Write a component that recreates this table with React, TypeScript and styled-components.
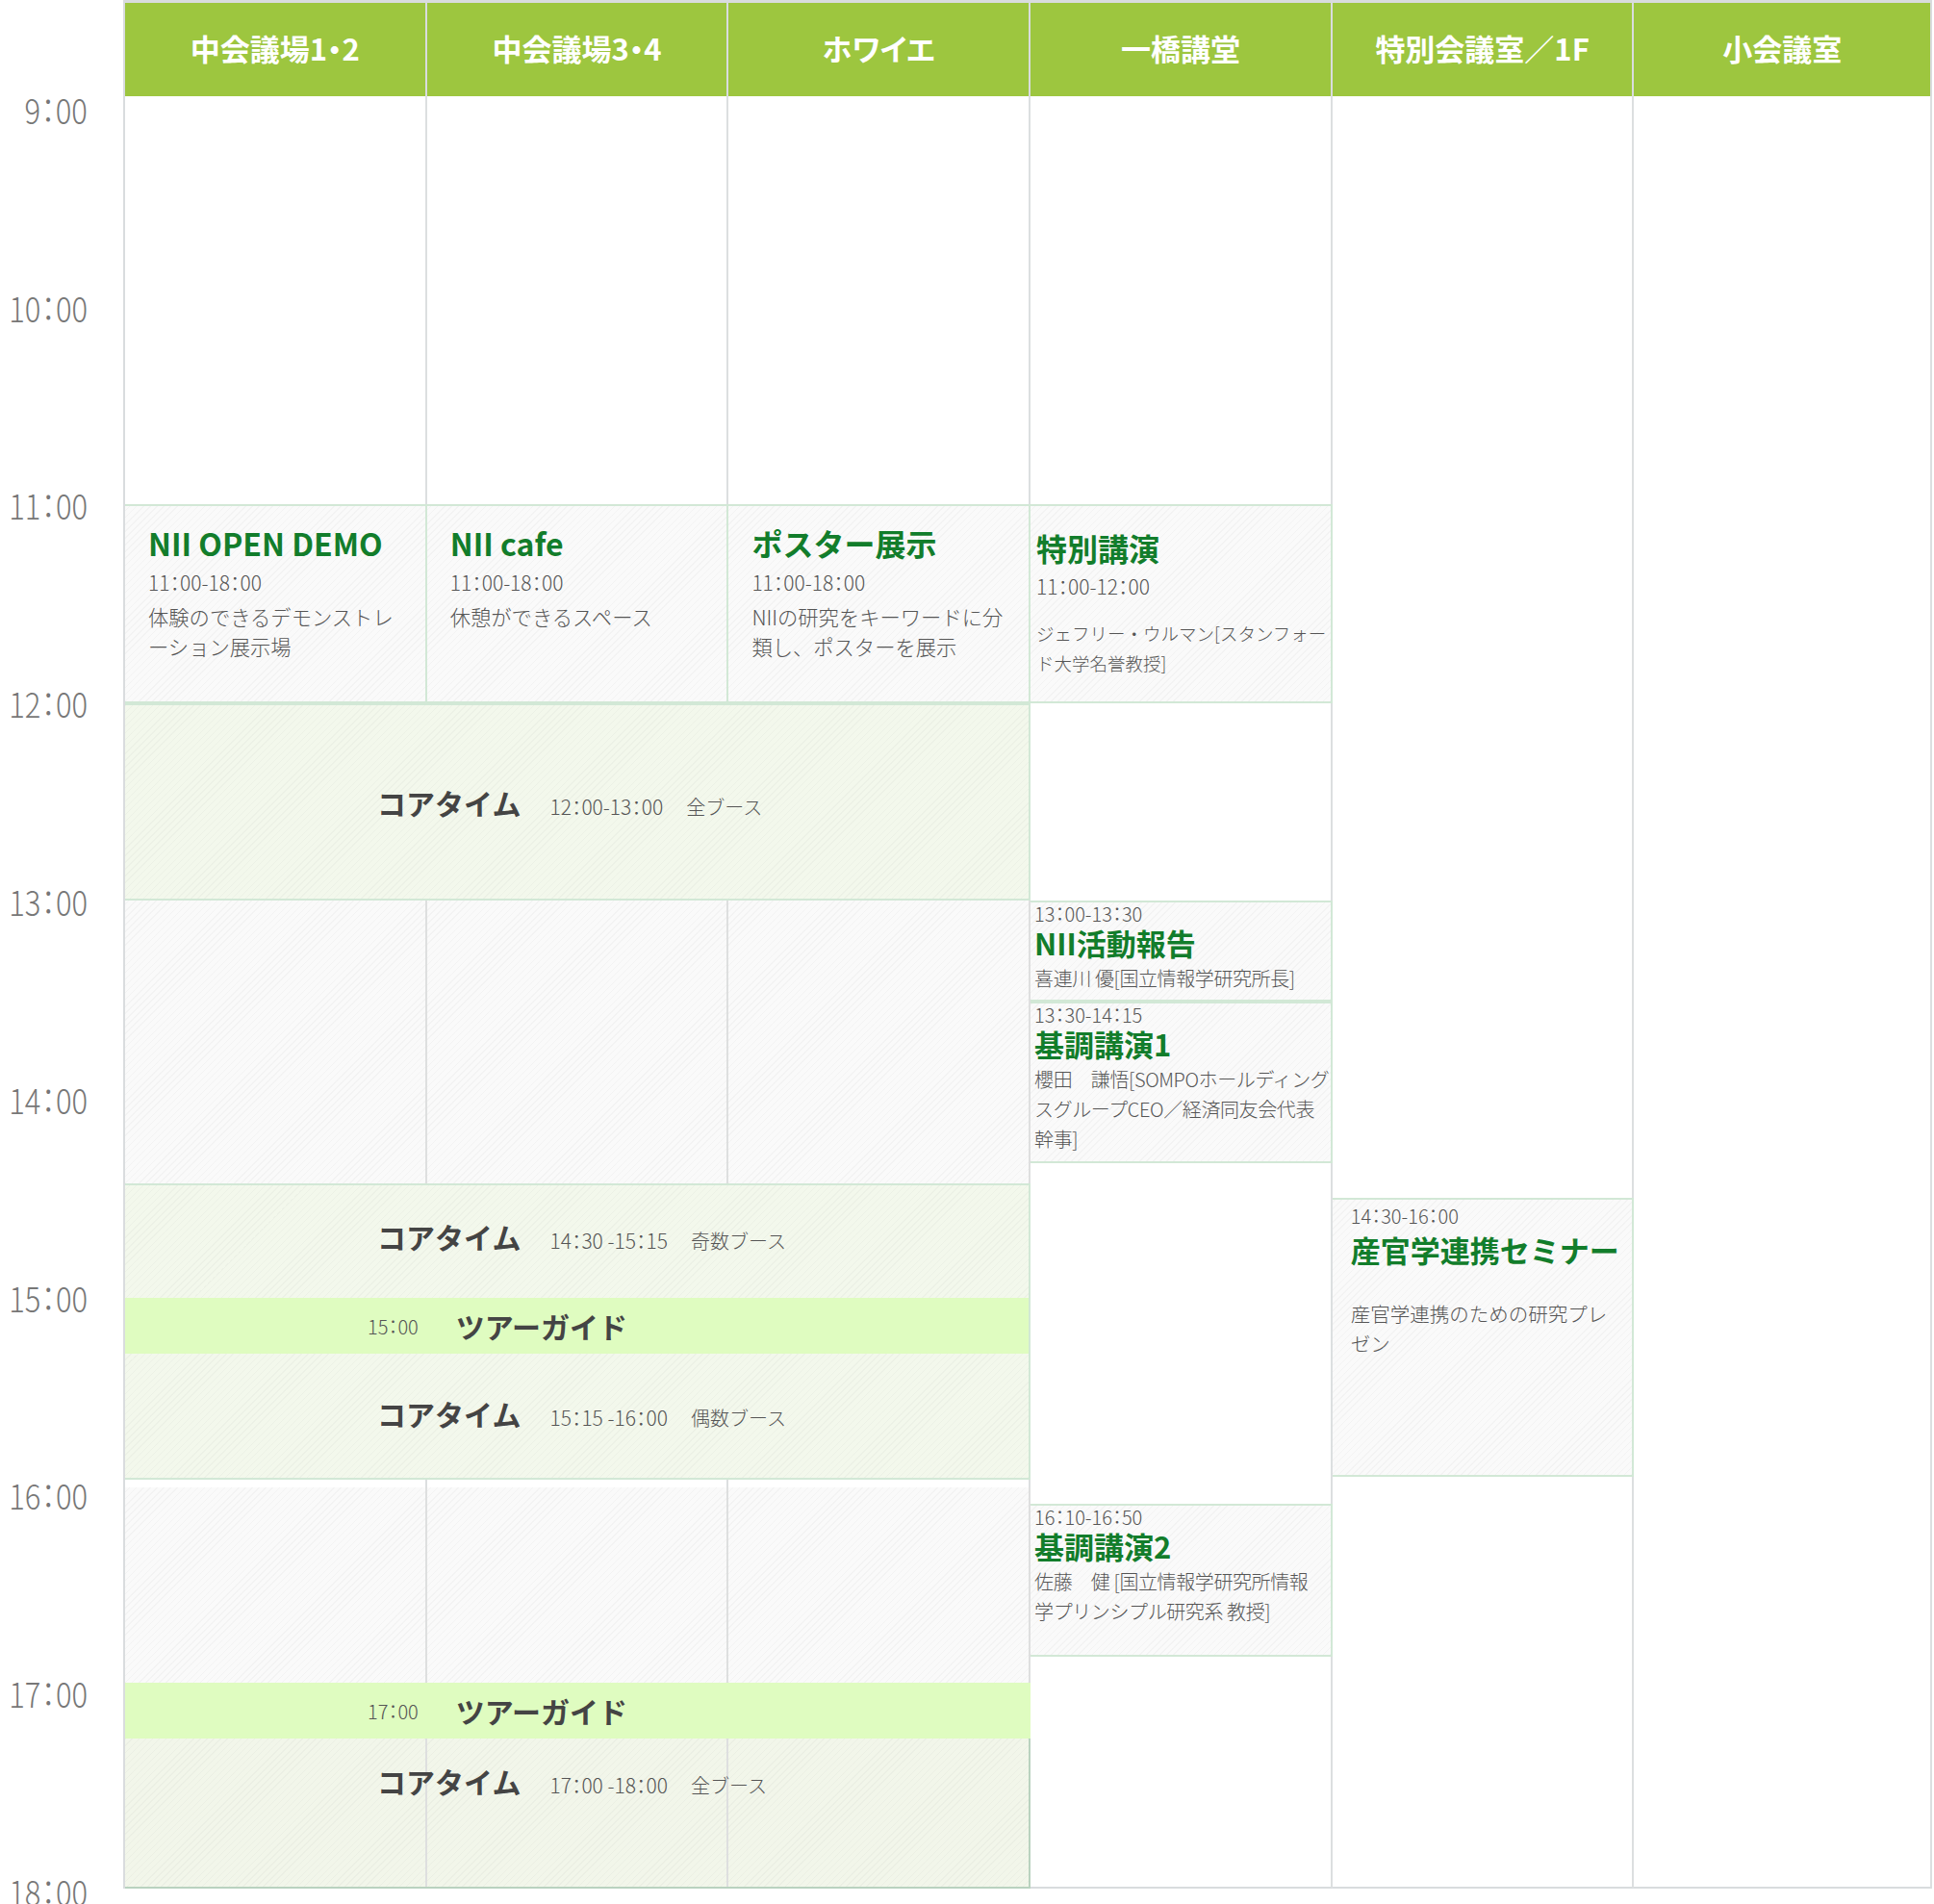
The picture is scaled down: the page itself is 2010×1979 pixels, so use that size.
import React from "react";
import styled, { createGlobalStyle, css } from "styled-components";

// y positions (page px) of every horizontal break in the timetable body
const LINES = [100, 524, 731, 936, 1041, 1209, 1230, 1245, 1535, 1538, 1546, 1563, 1722, 1749, 1807, 1963];
const rowTracks = LINES.slice(1)
  .map((y, i) => `${y - LINES[i]}px`)
  .join(" ");
const rows = (from: number, to: number) => `${LINES.indexOf(from) + 1} / ${LINES.indexOf(to) + 1}`;

const ROOMS = ["中会議場1・2", "中会議場3・4", "ホワイエ", "一橋講堂", "特別会議室／1F", "小会議室"];
const HOURS = ["9：00", "10：00", "11：00", "12：00", "13：00", "14：00", "15：00", "16：00", "17：00", "18：00"];

const GREEN_LINE = "#d2e8d6";
const GREY_LINE = "#dcdfe0";

const GlobalStyle = createGlobalStyle`
  html, body {
    margin: 0;
    padding: 0;
    background: #fff;
  }
  body {
    font-family: "Noto Sans CJK JP", "Noto Sans", sans-serif;
    color: #555;
  }
  * {
    box-sizing: border-box;
  }
`;

// proportional punctuation, so the fullwidth colons in times stay narrow
const palt = css`
  font-feature-settings: "palt";
`;

const hatch = (base: string) => css`
  background-color: ${base};
  background-image: repeating-linear-gradient(
    -45deg,
    rgba(0, 0, 0, 0.028) 0 1px,
    transparent 1px 5px
  );
`;

const Page = styled.div`
  display: flex;
  align-items: flex-start;
  width: 2010px;
`;

const TimeAxis = styled.div`
  flex: none;
  width: 128px;
  display: flex;
  flex-direction: column;
  padding-top: 10px;
`;

const HourMark = styled.div`
  height: 205.8px;
  display: flex;
  align-items: center;
  justify-content: flex-end;
  padding-right: 37px;
`;

const HourText = styled.span`
  ${palt}
  display: inline-block;
  font-size: 36px;
  font-weight: 200;
  line-height: 1;
  color: #777;
  white-space: nowrap;
  transform: scaleX(0.86);
  transform-origin: right center;
`;

const Table = styled.div`
  width: 1880px;
  border-top: 3px solid #d9dcde;
  border-left: 2px solid #d9dcde;
`;

const columns = css`
  display: grid;
  grid-template-columns: repeat(5, 313.7px) 1fr;
`;

const HeaderRow = styled.div`
  ${columns}
  height: 97px;
`;

const HeadCell = styled.div`
  ${palt}
  display: flex;
  align-items: center;
  justify-content: center;
  padding-bottom: 4px;
  background: #9dc63f;
  border-right: 2px solid #d9dcde;
  color: #fff;
  font-size: 31px;
  font-weight: 700;
  white-space: nowrap;
`;

const Body = styled.div`
  ${columns}
  grid-template-rows: ${rowTracks};
`;

const Track = styled.div<{ $col: number }>`
  grid-column: ${({ $col }) => $col};
  grid-row: 1 / -1;
  background: #fff;
  border-right: 2px solid ${GREY_LINE};
  border-bottom: 2px solid #d9dcde;
`;

const Placed = styled.div<{ $col: string; $row: string }>`
  grid-column: ${({ $col }) => $col};
  grid-row: ${({ $row }) => $row};
  min-width: 0;
  overflow: hidden;
`;

const EmptyCell = styled(Placed)<{ $tone?: "grey" | "green" }>`
  ${({ $tone }) => hatch($tone === "green" ? "#f2f6ea" : "#fafafa")}
  border-right: 2px solid #dedfdf;
`;

type Variant = "booth" | "keynote" | "talk" | "seminar";

const variantPad: Record<Variant, string> = {
  booth: "18px 10px 0 24px",
  keynote: "23px 0 0 6px",
  talk: "0 0 0 4px",
  seminar: "5px 0 0 19px",
};

const SessionBox = styled(Placed)<{ $variant: Variant }>`
  ${hatch("#fafafa")}
  border: 2px solid ${GREEN_LINE};
  border-left: none;
  padding: ${({ $variant }) => variantPad[$variant]};
`;

const Title = styled.div<{ $size: number; $lh: number; $gap: number }>`
  margin-top: ${({ $gap }) => $gap}px;
  color: #127d2b;
  font-size: ${({ $size }) => $size}px;
  line-height: ${({ $lh }) => $lh}px;
  font-weight: 700;
  white-space: nowrap;
`;

const Hours = styled.div<{ $size: number; $lh: number; $gap: number }>`
  ${palt}
  margin-top: ${({ $gap }) => $gap}px;
  font-size: ${({ $size }) => $size}px;
  line-height: ${({ $lh }) => $lh}px;
  font-weight: 300;
  color: #555;
  white-space: nowrap;
`;

const Desc = styled.div<{ $size: number; $gap: number; $lh: number; $tight?: boolean }>`
  margin-top: ${({ $gap }) => $gap}px;
  font-size: ${({ $size }) => $size}px;
  line-height: ${({ $lh }) => $lh}px;
  letter-spacing: ${({ $tight }) => ($tight ? "-0.4px" : "normal")};
  font-weight: 300;
  color: #555;
  white-space: nowrap;
`;

const CoreBlock = styled(Placed)`
  ${hatch("#f3f8ec")}
  border: 2px solid ${GREEN_LINE};
  border-left: none;
  display: flex;
  flex-direction: column;
`;

const CoreOverlay = styled(Placed)`
  border-right: 2px solid #b9d2bf;
  border-bottom: 2px solid #b9d2bf;
  padding-top: 24px;
`;

const CoreRow = styled.div<{ $h?: number; $lift?: number }>`
  display: flex;
  flex-wrap: wrap;
  align-items: baseline;
  align-content: center;
  padding: 0 0 ${({ $lift }) => $lift ?? 0}px 262px;
  height: ${({ $h }) => ($h ? `${$h}px` : "auto")};
  flex: ${({ $h }) => ($h ? "none" : "1")};
`;

const CoreTitle = styled.span`
  font-size: 30px;
  line-height: 40px;
  font-weight: 700;
  color: #444;
`;

const CoreTime = styled.span`
  ${palt}
  margin-left: 30px;
  font-size: 21px;
  font-weight: 300;
  color: #555;
`;

const CoreWhere = styled.span`
  margin-left: 24px;
  font-size: 20px;
  font-weight: 300;
  color: #555;
`;

const tourLine = css`
  display: flex;
  align-items: center;
  padding-left: 252px;
  background: #dffcc0;
`;

const TourBand = styled.div`
  ${tourLine}
  flex: none;
  height: 58px;
`;

const TourRow = styled(Placed)`
  ${tourLine}
`;

const TourTime = styled.span`
  ${palt}
  font-size: 20px;
  font-weight: 300;
  color: #555;
`;

const TourTitle = styled.span`
  margin-left: 39px;
  font-size: 30px;
  font-weight: 700;
  color: #444;
`;

type Session = {
  col: number;
  from: number;
  to: number;
  variant: Variant;
  title: string;
  hours: string;
  desc: string[];
};

const SESSIONS: Session[] = [
  {
    col: 1,
    from: 524,
    to: 731,
    variant: "booth",
    title: "NII OPEN DEMO",
    hours: "11：00-18：00",
    desc: ["体験のできるデモンストレ", "ーション展示場"],
  },
  {
    col: 2,
    from: 524,
    to: 731,
    variant: "booth",
    title: "NII cafe",
    hours: "11：00-18：00",
    desc: ["休憩ができるスペース"],
  },
  {
    col: 3,
    from: 524,
    to: 731,
    variant: "booth",
    title: "ポスター展示",
    hours: "11：00-18：00",
    desc: ["NIIの研究をキーワードに分", "類し、ポスターを展示"],
  },
  {
    col: 4,
    from: 524,
    to: 731,
    variant: "keynote",
    title: "特別講演",
    hours: "11：00-12：00",
    desc: ["ジェフリー・ウルマン[スタンフォー", "ド大学名誉教授]"],
  },
  {
    col: 4,
    from: 936,
    to: 1041,
    variant: "talk",
    title: "NII活動報告",
    hours: "13：00-13：30",
    desc: ["喜連川 優[国立情報学研究所長]"],
  },
  {
    col: 4,
    from: 1041,
    to: 1209,
    variant: "talk",
    title: "基調講演1",
    hours: "13：30-14：15",
    desc: ["櫻田　謙悟[SOMPOホールディング", "スグループCEO／経済同友会代表", "幹事]"],
  },
  {
    col: 5,
    from: 1245,
    to: 1535,
    variant: "seminar",
    title: "産官学連携セミナー",
    hours: "14：30-16：00",
    desc: ["産官学連携のための研究プレ", "ゼン"],
  },
  {
    col: 4,
    from: 1563,
    to: 1722,
    variant: "talk",
    title: "基調講演2",
    hours: "16：10-16：50",
    desc: ["佐藤　健 [国立情報学研究所情報", "学プリンシプル研究系 教授]"],
  },
];

const SessionCard = ({ s }: { s: Session }) => {
  const place = { $col: String(s.col), $row: rows(s.from, s.to) };
  if (s.variant === "booth" || s.variant === "keynote") {
    const keynote = s.variant === "keynote";
    return (
      <SessionBox {...place} $variant={s.variant}>
        <Title $size={32} $lh={40} $gap={0}>
          {s.title}
        </Title>
        <Hours $size={21} $lh={30} $gap={keynote ? 5 : 6}>
          {s.hours}
        </Hours>
        <Desc $size={keynote ? 18.5 : 21.3} $lh={30.5} $gap={keynote ? 19 : 6}>
          {s.desc.map((line) => (
            <div key={line}>{line}</div>
          ))}
        </Desc>
      </SessionBox>
    );
  }
  const seminar = s.variant === "seminar";
  return (
    <SessionBox {...place} $variant={s.variant}>
      <Hours $size={20} $lh={24} $gap={0}>
        {s.hours}
      </Hours>
      <Title $size={31} $lh={36} $gap={seminar ? 5 : 0}>
        {s.title}
      </Title>
      <Desc
        $size={seminar ? 20.5 : 20}
        $lh={seminar ? 30.5 : 31}
        $gap={seminar ? 33 : 3}
        $tight={!seminar}
      >
        {s.desc.map((line) => (
          <div key={line}>{line}</div>
        ))}
      </Desc>
    </SessionBox>
  );
};

const Core = ({ time, where }: { time: string; where: string }) => (
  <>
    <CoreTitle>コアタイム</CoreTitle>
    <CoreTime>{time}</CoreTime>
    <CoreWhere>{where}</CoreWhere>
  </>
);

const BOOTH_COLS = [1, 2, 3];

export default function App() {
  return (
    <>
      <GlobalStyle />
      <Page>
        <TimeAxis>
          {HOURS.map((h) => (
            <HourMark key={h}>
              <HourText>{h}</HourText>
            </HourMark>
          ))}
        </TimeAxis>

        <Table>
          <HeaderRow>
            {ROOMS.map((r) => (
              <HeadCell key={r}>{r}</HeadCell>
            ))}
          </HeaderRow>

          <Body>
            {[1, 2, 3, 4, 5, 6].map((c) => (
              <Track key={c} $col={c} />
            ))}

            {SESSIONS.slice(0, 4).map((s) => (
              <SessionCard key={s.title} s={s} />
            ))}

            <CoreBlock $col="1 / 4" $row={rows(731, 936)}>
              <CoreRow>
                <Core time="12：00-13：00" where="全ブース" />
              </CoreRow>
            </CoreBlock>

            {BOOTH_COLS.map((c) => (
              <EmptyCell key={`a${c}`} $col={String(c)} $row={rows(936, 1230)} />
            ))}

            {SESSIONS.slice(4, 6).map((s) => (
              <SessionCard key={s.title} s={s} />
            ))}

            <CoreBlock $col="1 / 4" $row={rows(1230, 1538)}>
              <CoreRow $h={117} $lift={12}>
                <Core time="14：30 -15：15" where="奇数ブース" />
              </CoreRow>
              <TourBand>
                <TourTime>15：00</TourTime>
                <TourTitle>ツアーガイド</TourTitle>
              </TourBand>
              <CoreRow $lift={5}>
                <Core time="15：15 -16：00" where="偶数ブース" />
              </CoreRow>
            </CoreBlock>

            <SessionCard s={SESSIONS[6]} />

            {BOOTH_COLS.map((c) => (
              <EmptyCell key={`b${c}`} $col={String(c)} $row={rows(1546, 1749)} />
            ))}

            <SessionCard s={SESSIONS[7]} />

            <TourRow $col="1 / 4" $row={rows(1749, 1807)}>
              <TourTime>17：00</TourTime>
              <TourTitle>ツアーガイド</TourTitle>
            </TourRow>

            {BOOTH_COLS.map((c) => (
              <EmptyCell key={`c${c}`} $tone="green" $col={String(c)} $row={rows(1807, 1963)} />
            ))}
            <CoreOverlay $col="1 / 4" $row={rows(1807, 1963)}>
              <CoreRow>
                <Core time="17：00 -18：00" where="全ブース" />
              </CoreRow>
            </CoreOverlay>
          </Body>
        </Table>
      </Page>
    </>
  );
}
